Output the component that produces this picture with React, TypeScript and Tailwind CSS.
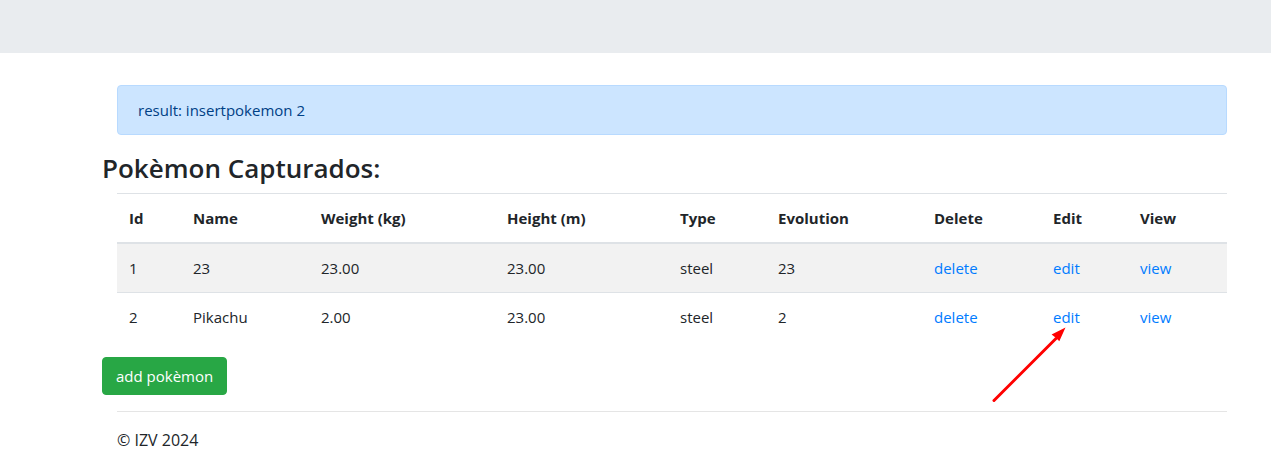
import React from "react";

type Pokemon = {
  id: number;
  name: string;
  weight: string;
  height: string;
  type: string;
  evolution: string;
  highlighted?: boolean;
};

const pokemons: Pokemon[] = [
  { id: 1, name: "23", weight: "23.00", height: "23.00", type: "steel", evolution: "23" },
  { id: 2, name: "Pikachu", weight: "2.00", height: "23.00", type: "steel", evolution: "2", highlighted: true },
];

const columns = [
  { title: "Id", width: "w-[64px]" },
  { title: "Name", width: "w-[128px]" },
  { title: "Weight (kg)", width: "w-[186px]" },
  { title: "Height (m)", width: "w-[173px]" },
  { title: "Type", width: "w-[98px]" },
  { title: "Evolution", width: "w-[156px]" },
  { title: "Delete", width: "w-[119px]" },
  { title: "Edit", width: "w-[87px]" },
  { title: "View", width: "w-[99px]" },
];

function ActionLink({ label }: { label: string }) {
  return (
    <a href="#" className="text-[#007bff] hover:underline">
      {label}
    </a>
  );
}

function Arrow() {
  return (
    <svg
      className="pointer-events-none absolute top-[22px] right-[14px] h-[76px] w-[74px]"
      viewBox="0 0 74 76"
      fill="none"
      aria-hidden="true"
    >
      <path d="M2 73.5 L64 11.5" stroke="#ff0000" strokeWidth="3" strokeLinecap="round" />
      <path d="M73.5 0.5 L67.3 14.2 L64.8 11.8 L62.2 9.4 L59.6 7.6 Z" fill="#ff0000" />
    </svg>
  );
}

export default function App() {
  return (
    <div className="font-['Segoe_UI','Open_Sans',sans-serif] text-[15px] leading-6 text-[#212529]">
      <header className="h-[53px] bg-[#e9ecef]" />
      <main className="pt-8 pr-11 pl-[117px]">
        <div role="alert" className="rounded border border-[#b8daff] bg-[#cce5ff] px-5 py-3 text-[#004085]">
          result: insertpokemon 2
        </div>
        <h1 className="mt-4 mb-2 -ml-[15px] text-[26px] leading-[34px] font-semibold">Pokèmon Capturados:</h1>
        <table className="w-full table-fixed text-left">
          <thead>
            <tr className="border-t border-b-2 border-[#dee2e6]">
              {columns.map((column) => (
                <th key={column.title} scope="col" className={`${column.width} p-3 font-bold`}>
                  {column.title}
                </th>
              ))}
            </tr>
          </thead>
          <tbody>
            {pokemons.map((pokemon) => (
              <tr key={pokemon.id} className="border-[#dee2e6] not-first:border-t odd:bg-[#f2f2f2]">
                <td className="p-3">{pokemon.id}</td>
                <td className="p-3">{pokemon.name}</td>
                <td className="p-3">{pokemon.weight}</td>
                <td className="p-3">{pokemon.height}</td>
                <td className="p-3">{pokemon.type}</td>
                <td className="p-3">{pokemon.evolution}</td>
                <td className="p-3">
                  <ActionLink label="delete" />
                </td>
                <td className="p-3">
                  <span className="relative inline-block">
                    <ActionLink label="edit" />
                    {pokemon.highlighted && <Arrow />}
                  </span>
                </td>
                <td className="p-3">
                  <ActionLink label="view" />
                </td>
              </tr>
            ))}
          </tbody>
        </table>
        <button
          type="button"
          className="mt-4 -ml-[15px] block rounded border border-[#28a745] bg-[#28a745] px-[13px] py-1.5 text-white"
        >
          add pokèmon
        </button>
        <hr className="my-4 border-black/10" />
      </main>
      <footer className="pb-4 pl-[117px] text-base">© IZV 2024</footer>
    </div>
  );
}
